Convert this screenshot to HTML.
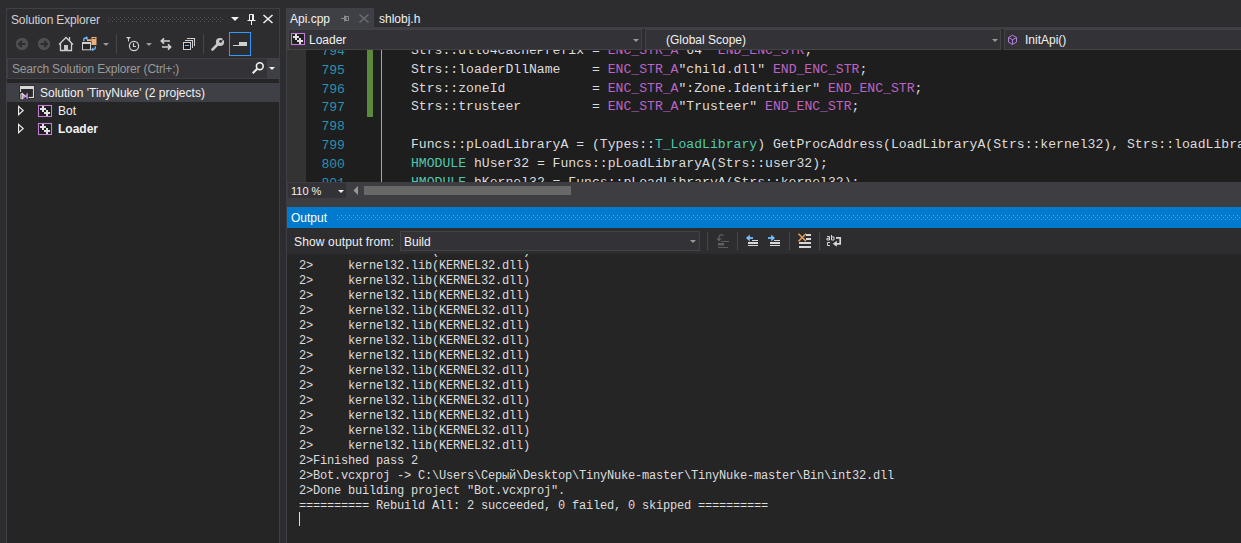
<!DOCTYPE html>
<html><head><meta charset="utf-8">
<style>
*{margin:0;padding:0;box-sizing:border-box}
html,body{width:1241px;height:543px;overflow:hidden;background:#2D2D30;font-family:"Liberation Sans",sans-serif;font-size:12px;color:#F1F1F1}
.a{position:absolute}
.ui{font-family:"Liberation Sans",sans-serif;font-size:12px;white-space:pre;line-height:14px}
.mono{font-family:"Liberation Mono",monospace;white-space:pre}
.code{font-size:13.12px;line-height:19px;color:#DCDCDC}
.ln{font-size:13.12px;line-height:19px;color:#2B91AF;text-align:right;width:60px}
.out{font-size:12px;letter-spacing:-0.2px;line-height:15px;color:#DCDCDC}
.mac{color:#BD63C5}
.typ{color:#4EC9B0}
</style></head><body>

<!-- ============ SOLUTION EXPLORER ============ -->
<div class="a" style="left:6px;top:8px;width:274px;height:535px;border:1px solid #3F3F46;border-bottom:none;background:#252526"></div>
<div class="a" style="left:7px;top:9px;width:272px;height:49px;background:#2D2D30"></div>
<div class="a ui" style="left:11px;top:13px;color:#D0D0D0;letter-spacing:-0.15px">Solution Explorer</div>

<!-- search box -->
<div class="a" style="left:7px;top:58px;width:272px;height:21px;background:#3F3F46"></div>
<div class="a" style="left:8px;top:59px;width:259px;height:19px;background:#333337"></div>
<div class="a ui" style="left:12px;top:62px;color:#999999;letter-spacing:-0.18px">Search Solution Explorer (Ctrl+;)</div>

<!-- tree -->
<div class="a" style="left:7px;top:83px;width:272px;height:19px;background:#3F3F46"></div>
<div class="a ui" style="left:40px;top:86px">Solution 'TinyNuke' (2 projects)</div>
<div class="a ui" style="left:58px;top:104px">Bot</div>
<div class="a ui" style="left:58px;top:122px;font-weight:bold">Loader</div>

<!-- ============ DOCUMENT WELL ============ -->
<div class="a" style="left:286px;top:8px;width:88px;height:19px;background:#3F3F46"></div>
<div class="a" style="left:286px;top:27px;width:955px;height:2px;background:#3F3F46"></div>
<div class="a ui" style="left:290px;top:12px">Api.cpp</div>
<div class="a ui" style="left:379px;top:12px">shlobj.h</div>

<!-- nav bar -->
<div class="a" style="left:286px;top:29px;width:955px;height:21px;background:#2D2D30"></div>
<div class="a" style="left:288px;top:29px;width:354px;height:21px;background:#333337;border:1px solid #434346"></div>
<div class="a" style="left:645px;top:29px;width:356px;height:21px;background:#333337;border:1px solid #434346"></div>
<div class="a" style="left:1004px;top:29px;width:240px;height:21px;background:#333337;border:1px solid #434346"></div>
<div class="a ui" style="left:309px;top:33px">Loader</div>
<div class="a ui" style="left:666px;top:33px">(Global Scope)</div>
<div class="a ui" style="left:1025px;top:33px">InitApi()</div>

<!-- editor -->
<div class="a" style="left:286px;top:50px;width:955px;height:132px;background:#1E1E1E;overflow:hidden">
  <div class="a" style="left:1px;top:0;width:19px;height:132px;background:#333333"></div>
  <div class="a" style="left:81px;top:0;width:6px;height:67px;background:#5C8A3C"></div>
  <div class="a" style="left:95px;top:0;width:1px;height:132px;background:#A5A5A5"></div>
</div>
<div id="code" class="a" style="left:286px;top:50px;width:955px;height:132px;overflow:hidden">
<div class="a mono ln" style="left:-1px;top:-8.0px">794</div>
<div class="a mono code" style="left:125px;top:-9.0px">Strs::dll64cachePrefix = <span class="mac">ENC_STR_A</span>"64" <span class="mac">END_ENC_STR</span>;</div>
<div class="a mono ln" style="left:-1px;top:10.8px">795</div>
<div class="a mono code" style="left:125px;top:9.8px">Strs::loaderDllName    = <span class="mac">ENC_STR_A</span>"child.dll" <span class="mac">END_ENC_STR</span>;</div>
<div class="a mono ln" style="left:-1px;top:29.6px">796</div>
<div class="a mono code" style="left:125px;top:28.6px">Strs::zoneId           = <span class="mac">ENC_STR_A</span>":Zone.Identifier" <span class="mac">END_ENC_STR</span>;</div>
<div class="a mono ln" style="left:-1px;top:48.4px">797</div>
<div class="a mono code" style="left:125px;top:47.4px">Strs::trusteer         = <span class="mac">ENC_STR_A</span>"Trusteer" <span class="mac">END_ENC_STR</span>;</div>
<div class="a mono ln" style="left:-1px;top:67.2px">798</div>
<div class="a mono code" style="left:125px;top:66.2px"></div>
<div class="a mono ln" style="left:-1px;top:86.0px">799</div>
<div class="a mono code" style="left:125px;top:85.0px">Funcs::pLoadLibraryA = (Types::<span class="typ">T_LoadLibrary</span>) GetProcAddress(LoadLibraryA(Strs::kernel32), Strs::loadLibraryA);</div>
<div class="a mono ln" style="left:-1px;top:104.8px">800</div>
<div class="a mono code" style="left:125px;top:103.8px"><span class="typ">HMODULE</span> hUser32 = Funcs::pLoadLibraryA(Strs::user32);</div>
<div class="a mono ln" style="left:-1px;top:123.6px">801</div>
<div class="a mono code" style="left:125px;top:122.6px"><span class="typ">HMODULE</span> hKernel32 = Funcs::pLoadLibraryA(Strs::kernel32);</div>
</div><!--/code-->

<div class="a" style="left:286px;top:27px;width:1px;height:155px;background:#3F3F46"></div><div class="a" style="left:287px;top:29px;width:1px;height:21px;background:#3F3F46"></div>
<!-- scrollbar / zoom -->
<div class="a" style="left:286px;top:182px;width:955px;height:25px;background:#3E3E42"></div>
<div class="a" style="left:288px;top:183px;width:58px;height:15px;background:#333337"></div>
<div class="a ui" style="left:291px;top:184px;font-size:11px">110 %</div>
<div class="a" style="left:364px;top:186px;width:207px;height:9px;background:#686868"></div>

<!-- ============ OUTPUT ============ -->
<div class="a" style="left:286px;top:207px;width:955px;height:336px;background:#252526;border-left:1px solid #3F3F46"></div>
<div class="a" style="left:287px;top:207px;width:954px;height:21px;background:#007ACC"></div>
<div class="a ui" style="left:291px;top:211px;color:#FFFFFF">Output</div>
<div class="a" style="left:287px;top:228px;width:954px;height:26px;background:#2D2D30"></div>
<div class="a ui" style="left:294px;top:235px;letter-spacing:0.15px">Show output from:</div>
<div class="a" style="left:400px;top:231px;width:300px;height:20px;background:#333337;border:1px solid #434346"></div>
<div class="a ui" style="left:404px;top:235px">Build</div>
<div id="out" class="a" style="left:287px;top:254px;width:954px;height:289px;overflow:hidden">
<div class="a mono out" style="left:12px;top:-10px">2&gt;     kernel32.lib(KERNEL32.dll)</div>
<div class="a mono out" style="left:12px;top:5px">2&gt;     kernel32.lib(KERNEL32.dll)</div>
<div class="a mono out" style="left:12px;top:20px">2&gt;     kernel32.lib(KERNEL32.dll)</div>
<div class="a mono out" style="left:12px;top:35px">2&gt;     kernel32.lib(KERNEL32.dll)</div>
<div class="a mono out" style="left:12px;top:50px">2&gt;     kernel32.lib(KERNEL32.dll)</div>
<div class="a mono out" style="left:12px;top:65px">2&gt;     kernel32.lib(KERNEL32.dll)</div>
<div class="a mono out" style="left:12px;top:80px">2&gt;     kernel32.lib(KERNEL32.dll)</div>
<div class="a mono out" style="left:12px;top:95px">2&gt;     kernel32.lib(KERNEL32.dll)</div>
<div class="a mono out" style="left:12px;top:110px">2&gt;     kernel32.lib(KERNEL32.dll)</div>
<div class="a mono out" style="left:12px;top:125px">2&gt;     kernel32.lib(KERNEL32.dll)</div>
<div class="a mono out" style="left:12px;top:140px">2&gt;     kernel32.lib(KERNEL32.dll)</div>
<div class="a mono out" style="left:12px;top:155px">2&gt;     kernel32.lib(KERNEL32.dll)</div>
<div class="a mono out" style="left:12px;top:170px">2&gt;     kernel32.lib(KERNEL32.dll)</div>
<div class="a mono out" style="left:12px;top:185px">2&gt;     kernel32.lib(KERNEL32.dll)</div>
<div class="a mono out" style="left:12px;top:200px">2&gt;Finished pass 2</div>
<div class="a mono out" style="left:12px;top:215px">2&gt;Bot.vcxproj -&gt; C:\Users\Серый\Desktop\TinyNuke-master\TinyNuke-master\Bin\int32.dll</div>
<div class="a mono out" style="left:12px;top:230px">2&gt;Done building project "Bot.vcxproj".</div>
<div class="a mono out" style="left:12px;top:245px">========== Rebuild All: 2 succeeded, 0 failed, 0 skipped ==========</div>
<div class="a" style="left:12px;top:258px;width:1px;height:14px;background:#DCDCDC"></div>
</div><!--/out-->


<!-- ============ ICON OVERLAY ============ -->
<svg class="a" style="left:0;top:0" width="1241" height="543" viewBox="0 0 1241 543">
<defs>
<pattern id="gripG" x="0" y="0" width="4" height="4" patternUnits="userSpaceOnUse"><rect x="0" y="1" width="1" height="1" fill="#505054"/><rect x="2" y="3" width="1" height="1" fill="#505054"/></pattern>
<pattern id="gripB" x="0" y="0" width="4" height="4" patternUnits="userSpaceOnUse"><rect x="1" y="3" width="1" height="1" fill="#59A6DC"/><rect x="3" y="1" width="1" height="1" fill="#59A6DC"/></pattern>
</defs>
<!-- SE title grip -->
<rect x="108" y="17" width="116" height="5" fill="url(#gripG)"/>
<!-- SE title dropdown, pin, close -->
<path d="M231 17h8l-4 4z" fill="#F1F1F1"/>
<path d="M249.5 14.5h4v6h-4z M247.5 20.5h8 M251.5 21v4" stroke="#F1F1F1" stroke-width="1" fill="none"/><rect x="252" y="15" width="1.5" height="5" fill="#F1F1F1"/>
<path d="M263.5 15l9 8 M272.5 15l-9 8" stroke="#F1F1F1" stroke-width="1.5" fill="none"/>

<!-- toolbar: back / forward -->
<circle cx="22" cy="44" r="6.2" fill="#4F4F52"/>
<path d="M25.5 44h-6.5 M21.8 41l-3 3 3 3" stroke="#2D2D30" stroke-width="1.8" fill="none"/>
<circle cx="44" cy="44" r="6.2" fill="#4F4F52"/>
<path d="M40.5 44h6.5 M44.2 41l3 3-3 3" stroke="#2D2D30" stroke-width="1.8" fill="none"/>
<!-- home -->
<path d="M59 44.5l7-7 7 7 M60.5 43.5v7h11v-7 M69.5 37v4.5" stroke="#D0D0D0" stroke-width="1.3" fill="none"/>
<rect x="64" y="45" width="4" height="6" fill="#C8C8C8"/>
<!-- sync with active doc -->
<rect x="82" y="42" width="9" height="8.3" fill="#D0D0D0"/><rect x="83" y="44" width="7" height="5.3" fill="#252526"/>
<rect x="91.5" y="37" width="5" height="8" fill="#EDB07A"/><rect x="92.5" y="38" width="3" height="1" fill="#4A3A2A"/>
<rect x="87" y="39.3" width="4.5" height="1.8" fill="#EDB07A"/>
<path d="M83.8 41.2V39.6q0-1.6 1.6-1.6h0.8" stroke="#75BEFF" stroke-width="1.3" fill="none"/><path d="M86 36l2.2 2-2.2 2z" fill="#75BEFF"/>
<path d="M95.3 46.2v1.6q0 1.6-1.6 1.6h-0.8" stroke="#75BEFF" stroke-width="1.3" fill="none"/><path d="M93.2 47.4l-2.2 2 2.2 2z" fill="#75BEFF"/>
<path d="M103 43h6l-3 3z" fill="#999999"/>
<rect x="116" y="34" width="1" height="20" fill="#46464A"/>
<!-- pending changes filter -->
<path d="M126 37h5l-2 2v2.5h-1v-2.5z" fill="#D0D0D0"/>
<circle cx="134" cy="46" r="4.6" stroke="#D0D0D0" stroke-width="1.2" fill="none"/>
<path d="M133.5 43v3.5h2.5" stroke="#D0D0D0" stroke-width="1.1" fill="none"/>
<path d="M146 43h6l-3 3z" fill="#999999"/>
<!-- sync arrows -->
<path d="M170 41h-8 M164 38.3l-2.6 2.7 2.6 2.7" stroke="#D0D0D0" stroke-width="1.7" fill="none"/>
<path d="M162 47h8 M168 44.3l2.6 2.7-2.6 2.7" stroke="#D0D0D0" stroke-width="1.7" fill="none"/>
<!-- collapse all -->
<rect x="185" y="40" width="8" height="1" fill="#D0D0D0"/><rect x="192" y="40" width="1" height="8" fill="#D0D0D0"/>
<rect x="187" y="38" width="8" height="1" fill="#D0D0D0"/><rect x="194" y="38" width="1" height="8" fill="#D0D0D0"/>
<rect x="183" y="42" width="8" height="8" fill="#D0D0D0"/><rect x="184" y="43" width="6" height="6" fill="#1E1E1E"/>
<rect x="185" y="45" width="4" height="1" fill="#6CB8F6"/>
<rect x="203" y="34" width="1" height="20" fill="#46464A"/>
<!-- wrench -->
<path d="M212.5 49.5l5.5-5.5" stroke="#C8C8C8" stroke-width="2.6" stroke-linecap="round" fill="none"/>
<circle cx="220" cy="42" r="4.1" fill="#C8C8C8"/>
<circle cx="220.6" cy="41.4" r="1.4" fill="#2D2D30"/>
<path d="M221 41l3.5-3.5 1.2 2z" fill="#2D2D30"/>
<!-- properties toggle (blue box) -->
<rect x="229.5" y="32.5" width="21" height="23" stroke="#3399FF" stroke-width="1" fill="none"/>
<rect x="233" y="45" width="7" height="1" fill="#D0D0D0"/>
<rect x="239" y="42" width="8" height="4" fill="#D0D0D0"/>

<!-- search magnifier + dropdown -->
<circle cx="259.8" cy="66.2" r="3.4" stroke="#F1F1F1" stroke-width="1.6" fill="none"/>
<path d="M257.2 68.8l-4.5 4.5" stroke="#F1F1F1" stroke-width="2" fill="none"/>
<path d="M269 67h6l-3 3z" fill="#F1F1F1"/>

<!-- tree: solution icon -->
<rect x="19.5" y="85.5" width="15" height="13" fill="#1E1E1E"/>
<rect x="20" y="86" width="14" height="3" fill="#D8D8D8"/>
<rect x="20" y="89" width="1.3" height="3" fill="#D8D8D8"/>
<rect x="32.7" y="89" width="1.3" height="9" fill="#D8D8D8"/>
<rect x="28.5" y="96.7" width="5.5" height="1.3" fill="#D8D8D8"/>
<rect x="21.3" y="89" width="11.4" height="7.7" fill="#2A2A2C"/>
<path d="M20 93.5 L22.5 92.5 L25.5 95.2 L28 92 L28 100 L25.5 97.2 L22.5 99.8 L20 98.8 Z" fill="#D8D8D8" stroke="#1E1E1E" stroke-width="0.6"/>
<path d="M21.5 94.3v3.8 M26.8 93.5v5" stroke="#B05BC8" stroke-width="1.1" fill="none"/>
<path d="M23 95.5l1.5 1.5-1.5 1.5" stroke="#7A4FA0" stroke-width="0.9" fill="none"/>
<!-- tree triangles -->
<path d="M18.6 106.3l4.6 4.2-4.6 4.2z" stroke="#F0F0F0" stroke-width="1.15" fill="none"/>
<path d="M18.6 124.3l4.6 4.2-4.6 4.2z" stroke="#F0F0F0" stroke-width="1.15" fill="none"/>
<!-- tree project icons -->
<g id="proj"><rect x="38.5" y="105.5" width="13" height="11" stroke="#C27BD6" stroke-width="1.1" fill="#1E1E1E"/>
<path d="M40 108h6v2h-6z M42 106h2v6h-2z M44 112h6v2h-6z M46 110h2v6h-2z" fill="#E0E0E0"/></g>
<use href="#proj" x="0" y="18"/>

<!-- tab pin + close (dim) -->
<path d="M341 18.5h3 M344.5 15.5v6 M345 16.5h3.5v4h-3.5" stroke="#8A8A8E" stroke-width="1" fill="none"/><rect x="345" y="17" width="1.5" height="3" fill="#8A8A8E"/>
<path d="M359.5 14.5l9 8 M368.5 14.5l-9 8" stroke="#6E6E72" stroke-width="1.3" fill="none"/>

<!-- nav bar icons -->
<use href="#proj" x="253" y="-72"/>
<path d="M633 39h6l-3 3z" fill="#999999"/>
<path d="M992 39h6l-3 3z" fill="#999999"/>
<path d="M1012.5 35.2l4 2.3v4.6l-4 2.3-4-2.3v-4.6z M1008.5 37.5l4 2.3 4-2.3 M1012.5 39.8v4.6" stroke="#B180D7" stroke-width="1" fill="none"/>

<!-- zoom dropdown arrow / scroll left -->
<path d="M338 190h6l-3 3z" fill="#F1F1F1"/>
<path d="M358 186v9l-4.5-4.5z" fill="#999999"/>

<!-- output title grip -->
<rect x="336" y="214" width="905" height="7" fill="url(#gripB)"/>

<!-- output toolbar -->
<path d="M690 240h6l-3 3z" fill="#999999"/>
<rect x="707" y="232" width="1" height="18" fill="#46464A"/>
<rect x="737" y="232" width="1" height="18" fill="#46464A"/>
<rect x="789" y="232" width="1" height="18" fill="#46464A"/>
<rect x="819" y="232" width="1" height="18" fill="#46464A"/>
<!-- goto (disabled) -->
<path d="M719 239.5v-2.5a2.3 2.3 0 0 1 4.4-0.9" stroke="#5E5E62" stroke-width="1.3" fill="none"/>
<path d="M716.3 238.6l2.7 3 2.7-3z" fill="#5E5E62"/>
<rect x="721" y="241" width="8" height="1" fill="#5E5E62"/>
<rect x="718" y="243" width="6" height="2.5" fill="#5E5E62"/>
<rect x="718" y="247" width="10" height="1" fill="#5E5E62"/>
<!-- prev -->
<path d="M753 238h-4.5" stroke="#75BEFF" stroke-width="1.8" fill="none"/>
<path d="M749.8 234.6l-3.8 3.4 3.8 3.4z" fill="#75BEFF"/>
<rect x="752" y="240" width="6" height="1" fill="#D8D8D8"/><rect x="748" y="242" width="10" height="2" fill="#D8D8D8"/><rect x="748" y="245" width="10" height="1" fill="#D8D8D8"/>
<!-- next -->
<path d="M768 238h4.5" stroke="#75BEFF" stroke-width="1.8" fill="none"/>
<path d="M771.2 234.6l3.8 3.4-3.8 3.4z" fill="#75BEFF"/>
<rect x="774" y="240" width="6" height="1" fill="#D8D8D8"/><rect x="770" y="242" width="10" height="2" fill="#D8D8D8"/><rect x="770" y="245" width="10" height="1" fill="#D8D8D8"/>
<!-- clear all -->
<rect x="806" y="234" width="5" height="2" fill="#D8D8D8"/><rect x="806" y="238" width="5" height="2" fill="#D8D8D8"/>
<rect x="799" y="242" width="12" height="2" fill="#D8D8D8"/><rect x="799" y="246" width="12" height="2" fill="#D8D8D8"/>
<path d="M798.5 233.8l7.5 7.5 M798.5 241.3l7.5-7.5" stroke="#E9A255" stroke-width="1.5" fill="none"/>
<!-- word wrap -->
<path d="M827 236.5h2.5v3.5h-2.5v-1.7h2.5 M831.5 235v5h2.5v-3h-2.5 M830 242.5h-2.5v3h2.5" stroke="#D8D8D8" stroke-width="1" fill="none"/>
<path d="M836 237.8h4.2v6h-4.5" stroke="#D8D8D8" stroke-width="1.7" fill="none"/>
<path d="M836.8 240.8l-4 3 4 3z" fill="#D8D8D8"/>
</svg>

</body></html>
